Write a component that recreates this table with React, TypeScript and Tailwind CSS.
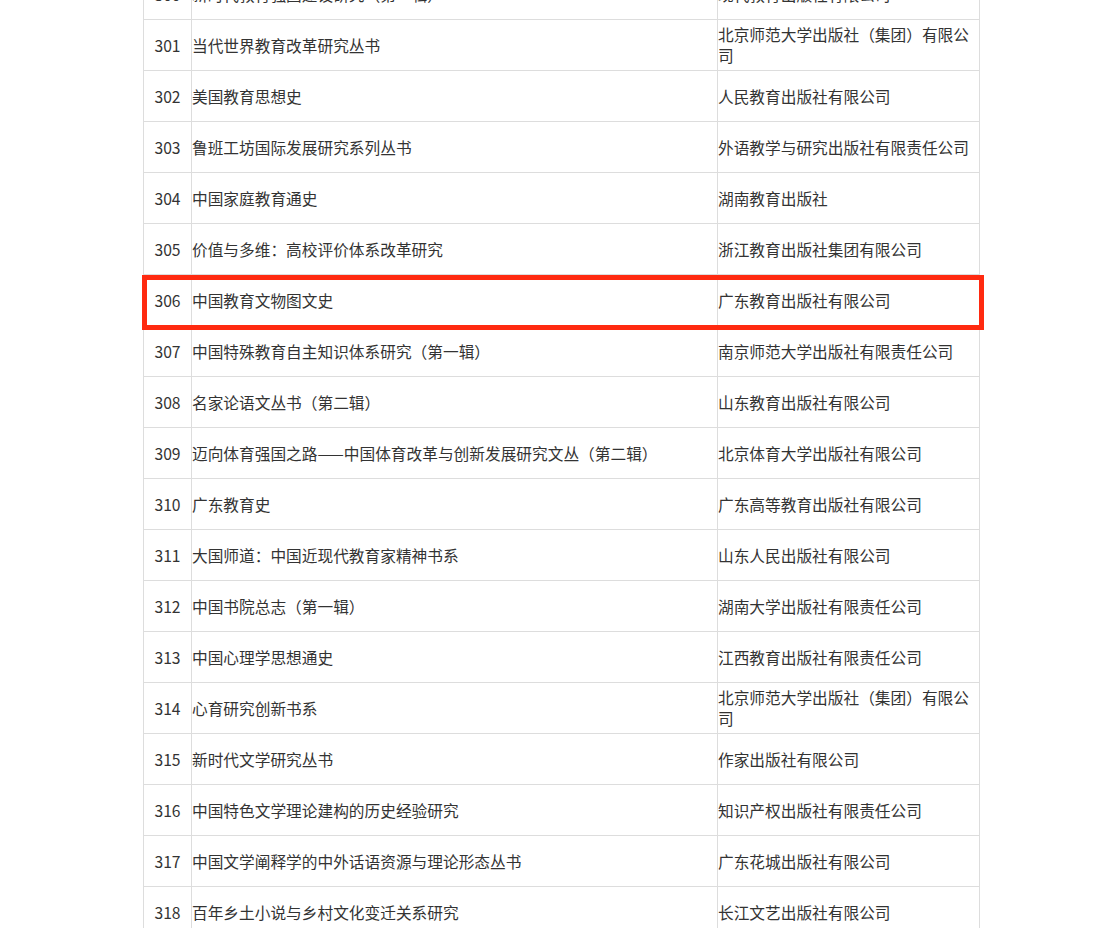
import React from "react";

const rows: [string, string, string][] = [
  ["300", "新时代教育强国建设研究（第一辑）", "现代教育出版社有限公司"],
  ["301", "当代世界教育改革研究丛书", "北京师范大学出版社（集团）有限公司"],
  ["302", "美国教育思想史", "人民教育出版社有限公司"],
  ["303", "鲁班工坊国际发展研究系列丛书", "外语教学与研究出版社有限责任公司"],
  ["304", "中国家庭教育通史", "湖南教育出版社"],
  ["305", "价值与多维：高校评价体系改革研究", "浙江教育出版社集团有限公司"],
  ["306", "中国教育文物图文史", "广东教育出版社有限公司"],
  ["307", "中国特殊教育自主知识体系研究（第一辑）", "南京师范大学出版社有限责任公司"],
  ["308", "名家论语文丛书（第二辑）", "山东教育出版社有限公司"],
  ["309", "迈向体育强国之路——中国体育改革与创新发展研究文丛（第二辑）", "北京体育大学出版社有限公司"],
  ["310", "广东教育史", "广东高等教育出版社有限公司"],
  ["311", "大国师道：中国近现代教育家精神书系", "山东人民出版社有限公司"],
  ["312", "中国书院总志（第一辑）", "湖南大学出版社有限责任公司"],
  ["313", "中国心理学思想通史", "江西教育出版社有限责任公司"],
  ["314", "心育研究创新书系", "北京师范大学出版社（集团）有限公司"],
  ["315", "新时代文学研究丛书", "作家出版社有限公司"],
  ["316", "中国特色文学理论建构的历史经验研究", "知识产权出版社有限责任公司"],
  ["317", "中国文学阐释学的中外话语资源与理论形态丛书", "广东花城出版社有限公司"],
  ["318", "百年乡土小说与乡村文化变迁关系研究", "长江文艺出版社有限公司"],
];

export default function App() {
  return (
    <div
      className="w-[1106px] h-[928px] overflow-hidden bg-white text-[#333] text-[15.7px] leading-[21px]"
      style={{ fontFamily: '"Noto Sans CJK SC", "Noto Sans", sans-serif' }}
    >
      <div className="ml-[143px] mt-[-31px] w-[837px] border-l border-[#dddddd]">
        {rows.map(([no, title, pub]) => (
          <div
            key={no}
            className="relative flex h-[51px] border-b border-[#dddddd]"
          >
            <div className="w-[48px] shrink-0 border-r border-[#dddddd] flex items-center justify-center">
              {no}
            </div>
            <div className="w-[526px] shrink-0 border-r border-[#dddddd] flex items-center">
              {title}
            </div>
            <div className="w-[262px] shrink-0 border-r border-[#dddddd] flex items-center">
              <span>{pub}</span>
            </div>
            {no === "306" && (
              <div className="absolute left-[-2px] top-0 w-[842px] h-[55px] border-[5px] border-[#ff2a10] z-10 pointer-events-none" />
            )}
          </div>
        ))}
      </div>
    </div>
  );
}
